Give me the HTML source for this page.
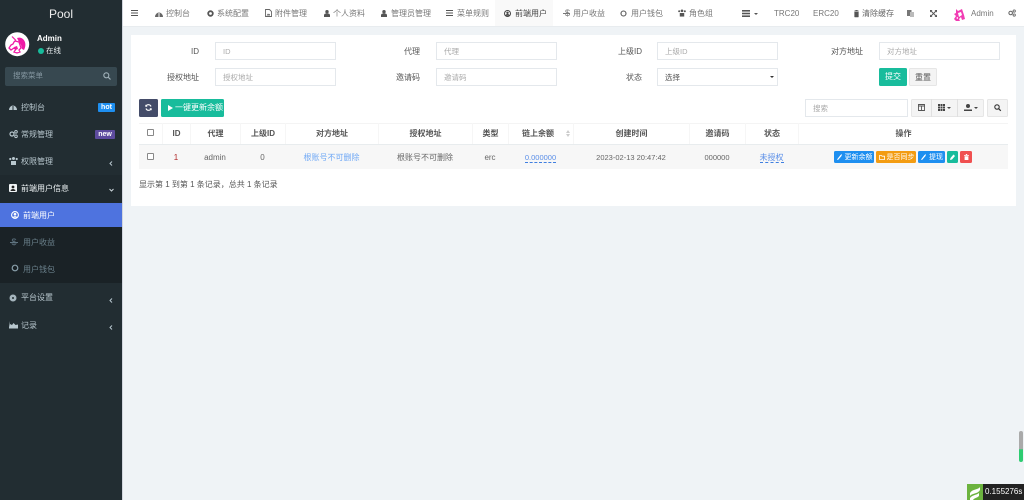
<!DOCTYPE html>
<html lang="zh"><head><meta charset="utf-8"><title>Pool</title>
<style>
*{box-sizing:border-box}
html,body{margin:0;padding:0;width:1024px;height:500px;overflow:hidden;background:#eff3f6;font-family:"Liberation Sans","Noto Sans CJK SC",sans-serif;font-size:8px;color:#555}
#w{position:absolute;left:0;top:0;width:1024px;height:500px;filter:blur(.3px)}
.a{position:absolute;white-space:nowrap;line-height:12px}
.b{position:absolute}
.c{text-align:center}
svg{position:absolute;overflow:visible}
.in{position:absolute;background:#fff;border:1px solid #e4e8ec;height:18px;width:121px;padding:0 7px;line-height:17px;color:#aaa;font-size:7.5px}
.lb{position:absolute;white-space:nowrap;line-height:12px;color:#555;text-align:right;width:60px;font-size:8px}
.sd{color:#b8c7ce}
.nav{color:#777;font-size:8px}
.th{position:absolute;top:123px;height:21px;line-height:21px;text-align:center;font-weight:bold;color:#555;border-left:1px solid #f6f6f6;font-size:8px}
.td{position:absolute;top:145px;height:24px;line-height:25px;text-align:center;color:#666;font-size:8px}
.op{position:absolute;top:151px;height:12px;line-height:13px;border-radius:1.5px;color:#fff;font-size:7px;text-align:center;white-space:nowrap}
</style></head><body><div id="w">

<!-- sidebar -->
<div class="b" style="left:0;top:0;width:122px;height:500px;background:#222d32"></div>
<div class="b" style="left:122px;top:0;width:1px;height:500px;background:#d2d6de"></div>
<div class="a c" style="left:0;top:7px;width:122px;font-size:12px;line-height:14px;color:#eee">Pool</div>

<svg style="left:5px;top:32px" width="25" height="25" viewBox="0 0 25 25">
<circle cx="12.2" cy="12.2" r="12" fill="#fff"/>
<path d="M7 4.500l4 4" stroke="#ef1aa6" stroke-width="1.200"/>
<path d="M12 6c3-1 6 0 7.500 3 1.500 3 1 6-.5 9l-2-1-1-4-2-3z" fill="#ef1aa6"/>
<path d="M10 9l4 1 1 3 1 3-2 2 1 2-3 1-3-1 2-3-2-1-3 2-2-2 2-3 2-1 1-2z" fill="none" stroke="#ef1aa6" stroke-width="1.300"/>
<path d="M9 15l3-1 1 3-3 1z" fill="#ef1aa6"/>
</svg>
<div class="a" style="left:37px;top:33px;color:#fff;font-weight:bold;font-size:8px">Admin</div>
<div class="b" style="left:37.500px;top:47.500px;width:6px;height:6px;border-radius:50%;background:#18bc9c"></div>
<div class="a" style="left:46px;top:45px;color:#e8eef0;font-size:7.500px">在线</div>

<div class="b" style="left:5px;top:67px;width:112px;height:19px;background:#374850;border-radius:2px"></div>
<div class="a" style="left:13px;top:70px;color:#8496a0;font-size:7.500px">搜索菜单</div>
<svg style="left:103px;top:72px" width="8" height="8" viewBox="0 0 8 8"><circle cx="3.300" cy="3.300" r="2.500" fill="none" stroke="#9fb0b8" stroke-width="1.100"/><path d="M5.200 5.200L7.500 7.500" stroke="#9fb0b8" stroke-width="1.200"/></svg>

<svg style="left:9px;top:103px" width="8" height="8" viewBox="0 0 8 8"><path d="M0 7a4 4.500 0 0 1 8 0z" fill="#b8c7ce"/><path d="M4 3v4" stroke="#222d32"/></svg>
<div class="a sd" style="left:21px;top:102px">控制台</div>
<div class="a c" style="left:98px;top:103px;width:17px;height:9px;line-height:9px;background:#1e8ff0;color:#fff;font-weight:bold;font-size:7px;border-radius:1px">hot</div>

<svg style="left:9px;top:130px" width="9" height="8" viewBox="0 0 9 8"><circle cx="3" cy="4" r="2" fill="none" stroke="#b8c7ce" stroke-width="1.200"/><circle cx="7" cy="1.800" r="1.300" fill="none" stroke="#b8c7ce"/><circle cx="7" cy="6.300" r="1.300" fill="none" stroke="#b8c7ce"/></svg>
<div class="a sd" style="left:21px;top:129px">常规管理</div>
<div class="a c" style="left:95px;top:130px;width:20px;height:9px;line-height:9px;background:#5d4b9e;color:#fff;font-weight:bold;font-size:7px;border-radius:1px">new</div>

<svg style="left:9px;top:157px" width="9" height="8" viewBox="0 0 9 8"><circle cx="4.500" cy="1.500" r="1.500" fill="#b8c7ce"/><circle cx="1.300" cy="2" r="1.100" fill="#b8c7ce"/><circle cx="7.700" cy="2" r="1.100" fill="#b8c7ce"/><path d="M2 8V4h5v4z" fill="#b8c7ce"/></svg>
<div class="a sd" style="left:21px;top:156px">权限管理</div>
<svg style="left:109px;top:161px" width="4" height="5" viewBox="0 0 4 5"><path d="M3 .5L1 2.500 3 4.500" fill="none" stroke="#b8c7ce"/></svg>

<div class="b" style="left:0;top:175px;width:122px;height:28px;background:#1f292e"></div>
<svg style="left:9px;top:184px" width="8" height="8" viewBox="0 0 8 8"><rect width="8" height="8" rx="1" fill="#f0f4f6"/><circle cx="4" cy="3" r="1.400" fill="#222"/><path d="M1.500 7a2.500 2 0 0 1 5 0z" fill="#222"/></svg>
<div class="a" style="left:21px;top:183px;color:#eef3f5">前端用户信息</div>
<svg style="left:109px;top:188px" width="5" height="4" viewBox="0 0 5 4"><path d="M.5 1L2.500 3 4.500 1" fill="none" stroke="#ccd6db"/></svg>

<div class="b" style="left:0;top:203px;width:122px;height:24px;background:#4e73df"></div>
<svg style="left:11px;top:211px" width="8" height="8" viewBox="0 0 8 8"><circle cx="4" cy="4" r="3.400" fill="none" stroke="#fff" stroke-width="1.100"/><circle cx="4" cy="3.200" r="1.300" fill="#fff"/><path d="M1.800 6.500a2.300 2 0 0 1 4.400 0z" fill="#fff"/></svg>
<div class="a" style="left:23px;top:210px;color:#fff">前端用户</div>

<div class="b" style="left:0;top:227px;width:122px;height:56px;background:#1a2226"></div>
<div class="a" style="left:11.500px;top:236px;color:#5f7480;font-size:9px">$</div>
<div class="b" style="left:10px;top:241.500px;width:8px;height:1px;background:#5f7480"></div>
<div class="a" style="left:23px;top:237px;color:#6a808b">用户收益</div>
<svg style="left:11px;top:264px" width="8" height="8" viewBox="0 0 8 8"><circle cx="4" cy="4" r="2.800" fill="none" stroke="#8aa0ab" stroke-width="1.200"/></svg>
<div class="a" style="left:23px;top:264px;color:#6a808b">用户钱包</div>

<svg style="left:9px;top:294px" width="8" height="8" viewBox="0 0 8 8"><circle cx="4" cy="4" r="3.500" fill="#a5b5bd"/><circle cx="4" cy="4" r="1" fill="#222d32"/></svg>
<div class="a sd" style="left:21px;top:292px">平台设置</div>
<svg style="left:109px;top:298px" width="4" height="5" viewBox="0 0 4 5"><path d="M3 .5L1 2.500 3 4.500" fill="none" stroke="#b8c7ce"/></svg>
<svg style="left:9px;top:321px" width="9" height="8" viewBox="0 0 9 8"><path d="M0 0v7.500h9V6.500H1z" fill="#b8c7ce"/><path d="M1 6.500V3l2 1 1.500-2 2 2L9 3.500v3z" fill="#b8c7ce"/></svg>
<div class="a sd" style="left:21px;top:320px">记录</div>
<svg style="left:109px;top:325px" width="4" height="5" viewBox="0 0 4 5"><path d="M3 .5L1 2.500 3 4.500" fill="none" stroke="#b8c7ce"/></svg>

<!-- top nav -->
<div class="b" style="left:123px;top:0;width:901px;height:27px;background:#fff;border-bottom:1px solid #e8ecef"></div>
<div class="b" style="left:495px;top:0;width:58px;height:26px;background:#f9f9f9"></div>
<svg style="left:131px;top:10px" width="7" height="6" viewBox="0 0 7 6"><path d="M0 .5h7M0 3h7M0 5.500h7" stroke="#555" stroke-width="1"/></svg>

<svg style="left:155px;top:10px" width="8" height="7" viewBox="0 0 8 7"><path d="M0 7a4 4.500 0 0 1 8 0z" fill="#666"/><path d="M4 3v4" stroke="#fff"/></svg>
<div class="a nav" style="left:166px;top:8px">控制台</div>
<svg style="left:207px;top:10px" width="7" height="7" viewBox="0 0 7 7"><circle cx="3.500" cy="3.500" r="2.300" fill="none" stroke="#555" stroke-width="1.800"/></svg>
<div class="a nav" style="left:217px;top:8px">系统配置</div>
<svg style="left:265px;top:9px" width="7" height="8" viewBox="0 0 7 8"><path d="M.5.500h4l2 2v5h-6z" fill="#fff" stroke="#666" stroke-width=".9"/><path d="M1.500 6.500l1.500-2 1 1 1-.8v1.800z" fill="#666"/></svg>
<div class="a nav" style="left:275px;top:8px">附件管理</div>
<svg style="left:324px;top:10px" width="6" height="7" viewBox="0 0 6 7"><circle cx="3" cy="1.700" r="1.700" fill="#555"/><path d="M0 7V5a2 2 0 0 1 2-1.500h2A2 2 0 0 1 6 5v2z" fill="#555"/></svg>
<div class="a nav" style="left:333px;top:8px">个人资料</div>
<svg style="left:381px;top:10px" width="6" height="7" viewBox="0 0 6 7"><circle cx="3" cy="1.700" r="1.700" fill="#555"/><path d="M0 7V5a2 2 0 0 1 2-1.500h2A2 2 0 0 1 6 5v2z" fill="#555"/></svg>
<div class="a nav" style="left:391px;top:8px">管理员管理</div>
<svg style="left:446px;top:10px" width="7" height="6" viewBox="0 0 7 6"><path d="M0 .5h7M0 3h7M0 5.500h7" stroke="#555"/></svg>
<div class="a nav" style="left:457px;top:8px">菜单规则</div>
<svg style="left:504px;top:10px" width="7" height="7" viewBox="0 0 7 7"><circle cx="3.500" cy="3.500" r="3" fill="none" stroke="#444"/><circle cx="3.500" cy="2.800" r="1.200" fill="#444"/><path d="M1.500 5.800a2 1.800 0 0 1 4 0z" fill="#444"/></svg>
<div class="a" style="left:515px;top:8px;color:#444">前端用户</div>
<div class="a" style="left:565px;top:7px;color:#777;font-size:9px">$</div>
<div class="b" style="left:563px;top:13px;width:7px;height:1px;background:#777"></div>
<div class="a nav" style="left:573px;top:8px">用户收益</div>
<svg style="left:620px;top:10px" width="7" height="7" viewBox="0 0 7 7"><circle cx="3.500" cy="3.500" r="2.500" fill="none" stroke="#555" stroke-width="1.100"/></svg>
<div class="a nav" style="left:631px;top:8px">用户钱包</div>
<svg style="left:678px;top:9px" width="8" height="8" viewBox="0 0 9 8"><circle cx="4.500" cy="1.500" r="1.500" fill="#555"/><circle cx="1.300" cy="2" r="1.100" fill="#555"/><circle cx="7.700" cy="2" r="1.100" fill="#555"/><path d="M2 8V4h5v4z" fill="#555"/></svg>
<div class="a nav" style="left:689px;top:8px">角色组</div>

<svg style="left:742px;top:10px" width="8" height="7" viewBox="0 0 8 7"><rect width="8" height="1.600" fill="#555"/><rect y="2.700" width="8" height="1.600" fill="#555"/><rect y="5.400" width="8" height="1.600" fill="#555"/></svg>
<svg style="left:754px;top:12.500px" width="4" height="2" viewBox="0 0 4 2"><path d="M0 0h4L2 2z" fill="#555"/></svg>
<div class="a nav" style="left:774px;top:8px">TRC20</div>
<div class="a nav" style="left:813px;top:8px">ERC20</div>
<svg style="left:853.500px;top:10px" width="5" height="7" viewBox="0 0 5 7"><path d="M0 1h5M1.500 1V.3h2V1M.6 2h3.800v5H.6z" fill="#555" stroke="#555" stroke-width=".5"/></svg>
<div class="a" style="left:862px;top:8px;color:#666">清除缓存</div>
<svg style="left:907px;top:10px" width="7" height="7" viewBox="0 0 7 7"><rect width="4.500" height="6" fill="#777"/><rect x="3" y="2" width="4" height="5" fill="#bbb"/></svg>
<svg style="left:930px;top:10px" width="7" height="7" viewBox="0 0 7 7"><path d="M1 1l5 5M6 1L1 6" stroke="#555" stroke-width=".9"/><path d="M0 0h2.500L0 2.500zM7 0v2.500L4.500 0zM0 7V4.500L2.500 7zM7 7H4.500L7 4.500z" fill="#555"/></svg>
<svg style="left:953px;top:8px" width="12" height="13" viewBox="0 0 12 13"><path d="M3 1l2 2 4-2 2 6 1 4-3 1-1-3-2 2 1 2-4 0-2-2 2-3-2-2 2-1z" fill="#ef1aa6" opacity=".85"/><path d="M5 5l3-1 1 3-3 2zM3 10l2-1v2z" fill="#fff"/></svg>
<div class="a" style="left:971px;top:8px;color:#777">Admin</div>
<svg style="left:1008px;top:9px" width="8" height="8" viewBox="0 0 9 8"><circle cx="3" cy="4" r="2" fill="none" stroke="#666" stroke-width="1.200"/><circle cx="7" cy="1.800" r="1.300" fill="none" stroke="#666"/><circle cx="7" cy="6.300" r="1.300" fill="none" stroke="#666"/></svg>

<!-- panel -->
<div class="b" style="left:131px;top:35px;width:885px;height:171px;background:#fff"></div>

<div class="lb" style="left:139px;top:46px">ID</div><div class="in" style="left:215px;top:42px">ID</div>
<div class="lb" style="left:360px;top:46px">代理</div><div class="in" style="left:436px;top:42px">代理</div>
<div class="lb" style="left:582px;top:46px">上级ID</div><div class="in" style="left:657px;top:42px">上级ID</div>
<div class="lb" style="left:803px;top:46px">对方地址</div><div class="in" style="left:879px;top:42px">对方地址</div>
<div class="lb" style="left:139px;top:72px">授权地址</div><div class="in" style="left:215px;top:68px">授权地址</div>
<div class="lb" style="left:360px;top:72px">邀请码</div><div class="in" style="left:436px;top:68px">邀请码</div>
<div class="lb" style="left:582px;top:72px">状态</div><div class="in" style="left:657px;top:68px;color:#555">选择</div>
<svg style="left:770px;top:76px" width="4" height="2" viewBox="0 0 4 2"><path d="M0 0h4L2 2z" fill="#333"/></svg>
<div class="a c" style="left:879px;top:68px;width:28px;height:18px;line-height:18px;background:#18bc9c;color:#fff;border-radius:1.500px">提交</div>
<div class="a c" style="left:909px;top:68px;width:28px;height:18px;line-height:17px;background:#f4f4f4;border:1px solid #e6e6e6;color:#555;border-radius:1.500px">重置</div>

<!-- toolbar -->
<div class="b" style="left:139px;top:99px;width:19px;height:18px;background:#444c69;border-radius:1.500px"></div>
<svg style="left:145px;top:104px" width="7" height="7" viewBox="0 0 7 7"><path d="M6 2.500A2.800 2.800 0 0 0 1 2M1 4.500A2.800 2.800 0 0 0 6 5" fill="none" stroke="#fff" stroke-width="1.100"/><path d="M.3.500V2.800h2.300zM6.700 6.500V4.200H4.400z" fill="#fff"/></svg>
<div class="b" style="left:161px;top:99px;width:63px;height:18px;background:#18bc9c;border-radius:1.500px"></div>
<svg style="left:168px;top:104.500px" width="5" height="6" viewBox="0 0 5 6"><path d="M0 0l5 3-5 3z" fill="#fff"/></svg>
<div class="a" style="left:175px;top:102px;color:#fff">一键更新余额</div>

<div class="in" style="left:805px;top:99px;width:103px;padding-left:7px">搜索</div>
<div class="b" style="left:911px;top:99px;width:73px;height:18px;background:#f4f4f4;border:1px solid #e6e6e6;border-radius:1.500px"></div>
<div class="b" style="left:931px;top:99px;width:1px;height:18px;background:#e0e0e0"></div>
<div class="b" style="left:957px;top:99px;width:1px;height:18px;background:#e0e0e0"></div>
<svg style="left:918px;top:104px" width="7" height="7" viewBox="0 0 7 7"><path d="M.5.500h6v6h-6zM.5 2h6M3.500 2v4.500" fill="none" stroke="#555" stroke-width=".9"/></svg>
<svg style="left:938px;top:104px" width="7" height="7" viewBox="0 0 7 7"><path d="M0 0h2v2H0zM2.500 0h2v2h-2zM5 0h2v2H5zM0 2.500h2v2H0zM2.500 2.500h2v2h-2zM5 2.500h2v2H5zM0 5h2v2H0zM2.500 5h2v2h-2zM5 5h2v2H5z" fill="#444"/></svg>
<svg style="left:947px;top:107px" width="4" height="2" viewBox="0 0 4 2"><path d="M0 0h4L2 2z" fill="#444"/></svg>
<svg style="left:964px;top:103.500px" width="8" height="7" viewBox="0 0 8 7"><circle cx="4" cy="2" r="2" fill="#444"/><path d="M0 7V5.500h8V7z" fill="#444"/></svg>
<svg style="left:974px;top:107px" width="4" height="2" viewBox="0 0 4 2"><path d="M0 0h4L2 2z" fill="#444"/></svg>
<div class="b" style="left:987px;top:99px;width:21px;height:18px;background:#f4f4f4;border:1px solid #e6e6e6;border-radius:1.500px"></div>
<svg style="left:994px;top:104px" width="7" height="7" viewBox="0 0 7 7"><circle cx="3" cy="3" r="2.200" fill="none" stroke="#333" stroke-width="1.100"/><path d="M4.700 4.700L6.800 6.800" stroke="#333" stroke-width="1.200"/></svg>

<!-- table -->
<div class="b" style="left:139px;top:123px;width:869px;height:22px;border-top:1px solid #f4f4f4;border-bottom:1px solid #e8ecee"></div>
<div class="b" style="left:139px;top:145px;width:869px;height:24px;background:#f7f7f7"></div>
<div class="b" style="left:147px;top:129px;width:7px;height:7px;border:1px solid #888;border-radius:1px;background:#fff"></div>
<div class="b" style="left:147px;top:153px;width:7px;height:7px;border:1px solid #888;border-radius:1px;background:#fff"></div>

<div class="th" style="left:162px;width:28px">ID</div>
<div class="th" style="left:190px;width:50px">代理</div>
<div class="th" style="left:240px;width:45px">上级ID</div>
<div class="th" style="left:285px;width:93px">对方地址</div>
<div class="th" style="left:378px;width:94px">授权地址</div>
<div class="th" style="left:472px;width:36px">类型</div>
<div class="th" style="left:508px;width:65px;padding-right:6px">链上余额</div>
<svg style="left:566px;top:130px" width="4" height="7" viewBox="0 0 4 7"><path d="M0 3h4L2 0zM0 4h4L2 7z" fill="#ccc"/></svg>
<div class="th" style="left:573px;width:116px">创建时间</div>
<div class="th" style="left:689px;width:56px">邀请码</div>
<div class="th" style="left:745px;width:53px">状态</div>
<div class="th" style="left:798px;width:210px">操作</div>

<div class="td" style="left:162px;width:28px;color:#b02a2a">1</div>
<div class="td" style="left:190px;width:50px">admin</div>
<div class="td" style="left:240px;width:45px">0</div>
<div class="td" style="left:285px;width:93px;color:#6fa8f5">根账号不可删除</div>
<div class="td" style="left:378px;width:94px">根账号不可删除</div>
<div class="td" style="left:472px;width:36px">erc</div>
<div class="td" style="left:508px;width:65px;color:#5b8fe8;font-size:7.500px"><span style="border-bottom:1px dashed #3f7fe0;padding-bottom:0">0.000000</span></div>
<div class="td" style="left:573px;width:116px;font-size:7.500px">2023-02-13 20:47:42</div>
<div class="td" style="left:689px;width:56px;font-size:7.500px">000000</div>
<div class="td" style="left:745px;width:53px;color:#5b8fe8"><span style="border-bottom:1px dashed #3f7fe0;padding-bottom:0">未授权</span></div>

<div class="op" style="left:834px;width:40px;background:#1e8ff0;padding-left:9px">更新余额</div>
<svg style="left:837px;top:154px" width="5" height="6" viewBox="0 0 5 6"><path d="M0 5.500L3.500 1 5 0 4.500 2 1 6z" fill="#fff"/></svg>
<div class="op" style="left:876px;width:40px;background:#f39c12;padding-left:9px">是否同步</div>
<svg style="left:879px;top:154.500px" width="6" height="5" viewBox="0 0 6 5"><path d="M.5.500h2l.5.700h2.500v3.300h-5z" fill="none" stroke="#fff" stroke-width=".8"/></svg>
<div class="op" style="left:918px;width:27px;background:#1e8ff0;padding-left:9px">提现</div>
<svg style="left:921px;top:154px" width="5" height="6" viewBox="0 0 5 6"><path d="M0 5.500L3.500 1 5 0 4.500 2 1 6z" fill="#fff"/></svg>
<div class="op" style="left:947px;width:11px;background:#18bc9c"></div>
<svg style="left:950px;top:154px" width="5" height="6" viewBox="0 0 5 6"><path d="M0 6l.5-2L3.500.5 5 2 2 5.500z" fill="#fff"/></svg>
<div class="op" style="left:960px;width:12px;background:#f05050"></div>
<svg style="left:963.500px;top:154px" width="5" height="6" viewBox="0 0 5 6"><path d="M0 1h5v.8H0zM.6 2.200h3.800V6H.6zM1.800 0h1.400v1H1.800z" fill="#fff"/></svg>

<div class="a" style="left:139px;top:179px;color:#555">显示第 1 到第 1 条记录，总共 1 条记录</div>

<!-- trace -->
<div class="b" style="left:1019px;top:431px;width:4px;height:31px;border-radius:2px;background:linear-gradient(#aaa 0,#aaa 58%,#2ecc71 60%,#2ecc71 100%)"></div>
<div class="b" style="left:967px;top:484px;width:16px;height:16px;background:#6cb33f"></div>
<svg style="left:967px;top:484px" width="16" height="16" viewBox="0 0 16 16"><path d="M3 9c2-4 8-3 10-6v3c-2 4-8 3-10 6zM3 14c2-3 7-3 9-5v3c-2 2-5 2-6 4H3z" fill="#fff"/></svg>
<div class="b" style="left:983px;top:484px;width:41px;height:16px;background:#222"></div>
<div class="a" style="left:985px;top:486px;color:#fff;font-size:8px">0.155276s</div>
</div></body></html>
